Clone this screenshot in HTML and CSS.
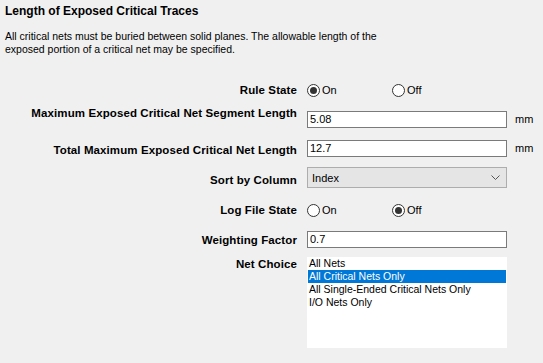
FILE: index.html
```html
<!DOCTYPE html>
<html lang="en">

<head>
    <meta charset="utf-8">
    <title>Length of Exposed Critical Traces</title>
    <link rel="stylesheet" href="styles.css">
</head>

<body>
    <div class="page">
        <div class="heading">Length of Exposed Critical Traces</div>
        <div class="desc">All critical nets must be buried between solid planes. The allowable length of the<br>exposed portion of a critical net may be specified.</div>

        <div class="form">
            <div class="row row-rule">
                <div class="label">Rule State</div>
                <div class="radios">
                    <label class="radio"><span class="dot checked"></span>On</label>
                    <label class="radio"><span class="dot"></span>Off</label>
                </div>
            </div>
            <div class="row row-seg">
                <div class="label">Maximum Exposed Critical Net Segment Length</div>
                <div class="input">5.08</div>
                <div class="unit">mm</div>
            </div>
            <div class="row row-total">
                <div class="label">Total Maximum Exposed Critical Net Length</div>
                <div class="input">12.7</div>
                <div class="unit">mm</div>
            </div>
            <div class="row row-sort">
                <div class="label">Sort by Column</div>
                <div class="select">
                    <span>Index</span>
                    <svg width="9" height="5" viewBox="0 0 9 5"><path d="M0.5 0.5 L4.5 4.5 L8.5 0.5" fill="none" stroke="#555" stroke-width="1"/></svg>
                </div>
            </div>
            <div class="row row-log">
                <div class="label">Log File State</div>
                <div class="radios">
                    <label class="radio"><span class="dot"></span>On</label>
                    <label class="radio"><span class="dot checked"></span>Off</label>
                </div>
            </div>
            <div class="row row-weight">
                <div class="label">Weighting Factor</div>
                <div class="input">0.7</div>
            </div>
            <div class="row row-net">
                <div class="label">Net Choice</div>
                <div class="list">
                    <div class="item">All Nets</div>
                    <div class="item selected">All Critical Nets Only</div>
                    <div class="item">All Single-Ended Critical Nets Only</div>
                    <div class="item">I/O Nets Only</div>
                </div>
            </div>
        </div>
    </div>
</body>

</html>
```

FILE: styles.css
```css
body {
    margin: 0;
    background: #f0f0f0;
    color: #000;
    font-family: "Liberation Sans", Arial, sans-serif;
    font-size: 11px;
}

.page {
    padding: 4px 0 0 5px;
}

.heading {
    font-weight: bold;
    font-size: 12px;
    line-height: 14px;
}

.desc {
    margin-top: 12px;
    font-size: 10.5px;
    line-height: 13px;
}

.form {
    margin-top: 27px;
}

.row {
    display: flex;
    align-items: flex-start;
}

.label {
    width: 292px;
    text-align: right;
    font-weight: bold;
    font-size: 11.5px;
    letter-spacing: 0.1px;
    line-height: 14px;
    margin-right: 10px;
    flex-shrink: 0;
}

.radios {
    display: flex;
    line-height: 14px;
}

.radio {
    display: flex;
    align-items: center;
    width: 85px;
}

.dot {
    width: 11px;
    height: 11px;
    border: 1px solid #333;
    border-radius: 50%;
    background: #fff;
    margin-right: 2px;
    position: relative;
}

.dot.checked::after {
    content: "";
    position: absolute;
    left: 2px;
    top: 2px;
    width: 7px;
    height: 7px;
    border-radius: 50%;
    background: #333;
}

.input {
    height: 15px;
    line-height: 15px;
    border: 1px solid #7a7a7a;
    background: #fff;
    padding-left: 2px;
    width: 196px;
}

.unit {
    margin-left: 8px;
    line-height: 17px;
    margin-top: 5px;
}

.select {
    display: flex;
    align-items: center;
    justify-content: space-between;
    height: 19px;
    border: 1px solid #adadad;
    background: #e5e5e5;
    padding: 0 6px 0 4px;
    width: 188px;
}

.list {
    width: 198px;
    height: 91px;
    background: #fff;
    padding: 0 1px;
}

.item {
    font-size: 10.5px;
    line-height: 13px;
    padding-left: 1px;
}

.item.selected {
    background: #0078d7;
    color: #fff;
}

.row-seg {
    margin-top: 9px;
}

.row-seg .input {
    margin-top: 5px;
}

.row-total {
    margin-top: 12px;
}

.row-total .label {
    padding-top: 3px;
}

.row-total .unit {
    margin-top: 0;
}

.row-sort {
    margin-top: 10px;
}

.row-sort .label {
    padding-top: 6px;
}

.row-log {
    margin-top: 15px;
}

.row-weight {
    margin-top: 14px;
}

.row-weight .label {
    padding-top: 2px;
}

.row-net {
    margin-top: 9px;
}
```
